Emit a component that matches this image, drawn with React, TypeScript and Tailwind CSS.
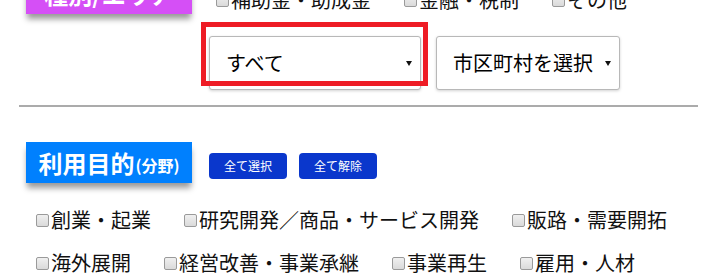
const purposes = [
  ["創業・起業", "研究開発／商品・サービス開発", "販路・需要開拓"],
  ["海外展開", "経営改善・事業承継", "事業再生", "雇用・人材"],
];

const kinds = ["補助金・助成金", "金融・税制", "その他"];

function Check({ label }: { label: string }) {
  return (
    <label className="flex items-center">
      <span className="w-[13px] h-[13px] mr-[2px] mt-[1px] rounded-[2px] border border-[#9a9a9a] bg-gradient-to-b from-[#f0f0f0] to-[#dadada]" />
      <span>{label}</span>
    </label>
  );
}

function FakeSelect({ value, width }: { value: string; width: string }) {
  return (
    <div
      className={`${width} h-[54px] flex items-center justify-between pl-[16px] pr-[8px] bg-white border border-[#b8b8b8] rounded-[3px] shadow-[0_1px_3px_rgba(0,0,0,0.18)] text-[20px] text-black`}
    >
      <span>{value}</span>
      <svg width="6" height="5" viewBox="0 0 6 5" className="mt-[1px]">
        <path d="M0 0 L6 0 L3 5 Z" fill="#111" />
      </svg>
    </div>
  );
}

function Heading({ color, children }: { color: string; children: React.ReactNode }) {
  return (
    <div
      className={`${color} w-[166px] h-[41px] shrink-0 flex items-center justify-center text-white font-bold text-[24px] leading-none shadow-[0_6px_6px_-1px_rgba(0,0,0,0.4)]`}
    >
      {children}
    </div>
  );
}

export default function App() {
  return (
    <div className="w-[715px] h-[275px] overflow-hidden bg-white text-[#111] font-['Noto_Sans_CJK_JP',sans-serif]">
      {/* 種別/エリア */}
      <div className="-mt-[27px] flex pl-[26px]">
        <Heading color="bg-[#d54ff6]">種別/エリア</Heading>
        <div className="ml-[17px] flex flex-col">
          <div className="mt-[15px] h-[24px] flex items-center gap-[33px] pl-[7px] text-[20px] leading-none">
            {kinds.map((k) => (
              <Check key={k} label={k} />
            ))}
          </div>
          <div className="mt-[24px] flex gap-[15px]">
            <div className="relative">
              <FakeSelect value="すべて" width="w-[212px]" />
              <div className="absolute -left-[8px] -top-[14px] w-[227px] h-[64px] border-[5px] border-[#ee1c25] pointer-events-none" />
            </div>
            <FakeSelect value="市区町村を選択" width="w-[184px]" />
          </div>
        </div>
      </div>

      <div className="mt-[15px] ml-[19px] w-[679px] h-[2px] bg-[#ababab]" />

      {/* 利用目的 */}
      <div className="mt-[35px] flex items-center pl-[26px]">
        <Heading color="bg-[#0080fe]">
          利用目的<span className="text-[16px] ml-[1px] mt-[5px]">(分野)</span>
        </Heading>
        <div className="ml-[17px] mt-[7px] flex gap-[12px]">
          <button className="w-[78px] h-[26px] rounded-[4px] bg-[#0a37cc] text-white text-[12px]">全て選択</button>
          <button className="w-[78px] h-[26px] rounded-[4px] bg-[#0a37cc] text-white text-[12px]">全て解除</button>
        </div>
      </div>

      <div className="mt-[22px] pl-[36px] flex flex-col gap-[13px] text-[20px] leading-none">
        {purposes.map((row, i) => (
          <div key={i} className="h-[30px] flex items-center gap-[33px]">
            {row.map((p) => (
              <Check key={p} label={p} />
            ))}
          </div>
        ))}
      </div>
    </div>
  );
}
